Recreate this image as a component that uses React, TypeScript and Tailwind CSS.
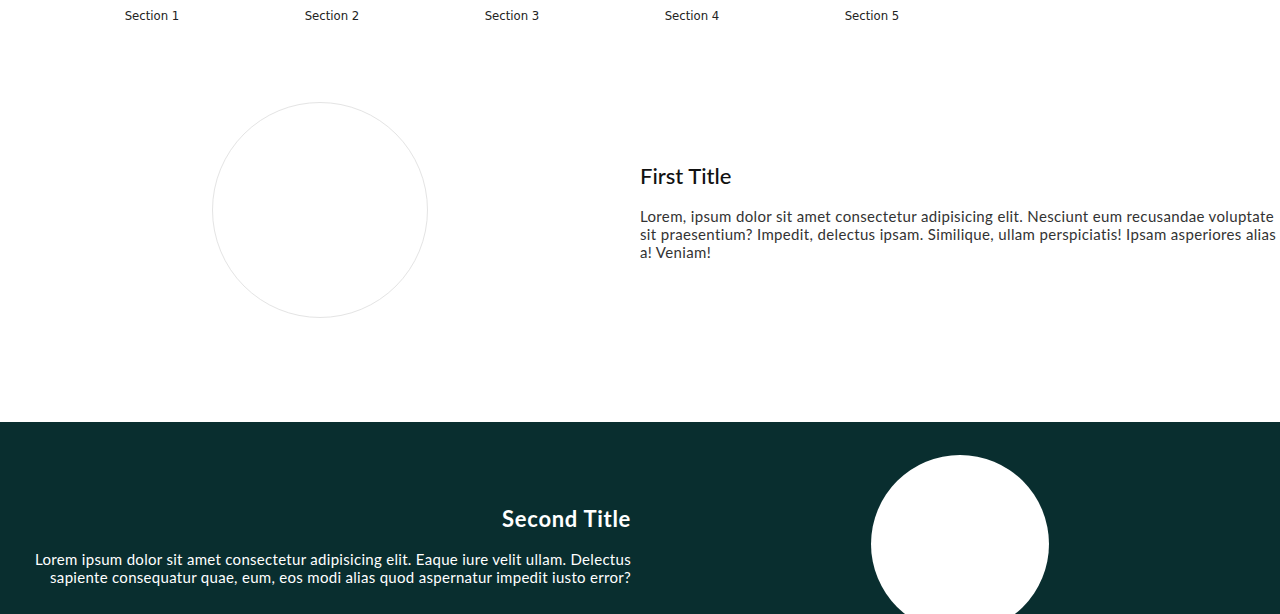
export default function App() {
  const sections = ["Section 1", "Section 2", "Section 3", "Section 4", "Section 5"];
  return (
    <div className="w-[1280px] bg-white" style={{ fontFamily: "Lato, 'Open Sans', sans-serif" }}>
      <nav className="flex h-[30px] items-center pl-[62px] pt-[2px]">
        {sections.map((s) => (
          <a
            key={s}
            className="w-[180px] text-center text-[13px] text-[#222]"
            style={{ fontFamily: "'DejaVu Sans Condensed', 'Roboto', sans-serif", fontStretch: "condensed" }}
          >
            {s}
          </a>
        ))}
      </nav>

      <section className="flex h-[360px] items-center mb-[32px]">
        <div className="flex w-[640px] justify-center">
          <div className="h-[216px] w-[216px] rounded-full border border-[#e4e4e4]" />
        </div>
        <div className="w-[640px] text-[#333]">
          <h1 className="mb-[15px] text-[22px] font-medium text-[#111]">First Title</h1>
          <p className="w-[638px] text-[15px] leading-[18px] tracking-[0.35px]">
            Lorem, ipsum dolor sit amet consectetur adipisicing elit. Nesciunt eum recusandae voluptate sit
            praesentium? Impedit, delectus ipsam. Similique, ullam perspiciatis! Ipsam asperiores alias a! Veniam!
          </p>
        </div>
      </section>

      <section className="flex items-center bg-[#092e2f] py-[33px]">
        <div className="flex w-[640px] justify-end pr-[9px]">
          <div className="w-[605px] text-right text-white">
            <h2 className="mb-[15px] text-[22px] font-bold tracking-[0.7px]">Second Title</h2>
            <p className="text-[15px] leading-[18px] tracking-[0.3px]">
              Lorem ipsum dolor sit amet consectetur adipisicing elit. Eaque iure velit ullam. Delectus sapiente
              consequatur quae, eum, eos modi alias quod aspernatur impedit iusto error?
            </p>
          </div>
        </div>
        <div className="flex w-[640px] justify-center">
          <div className="h-[178px] w-[178px] rounded-full bg-white" />
        </div>
      </section>
    </div>
  );
}
